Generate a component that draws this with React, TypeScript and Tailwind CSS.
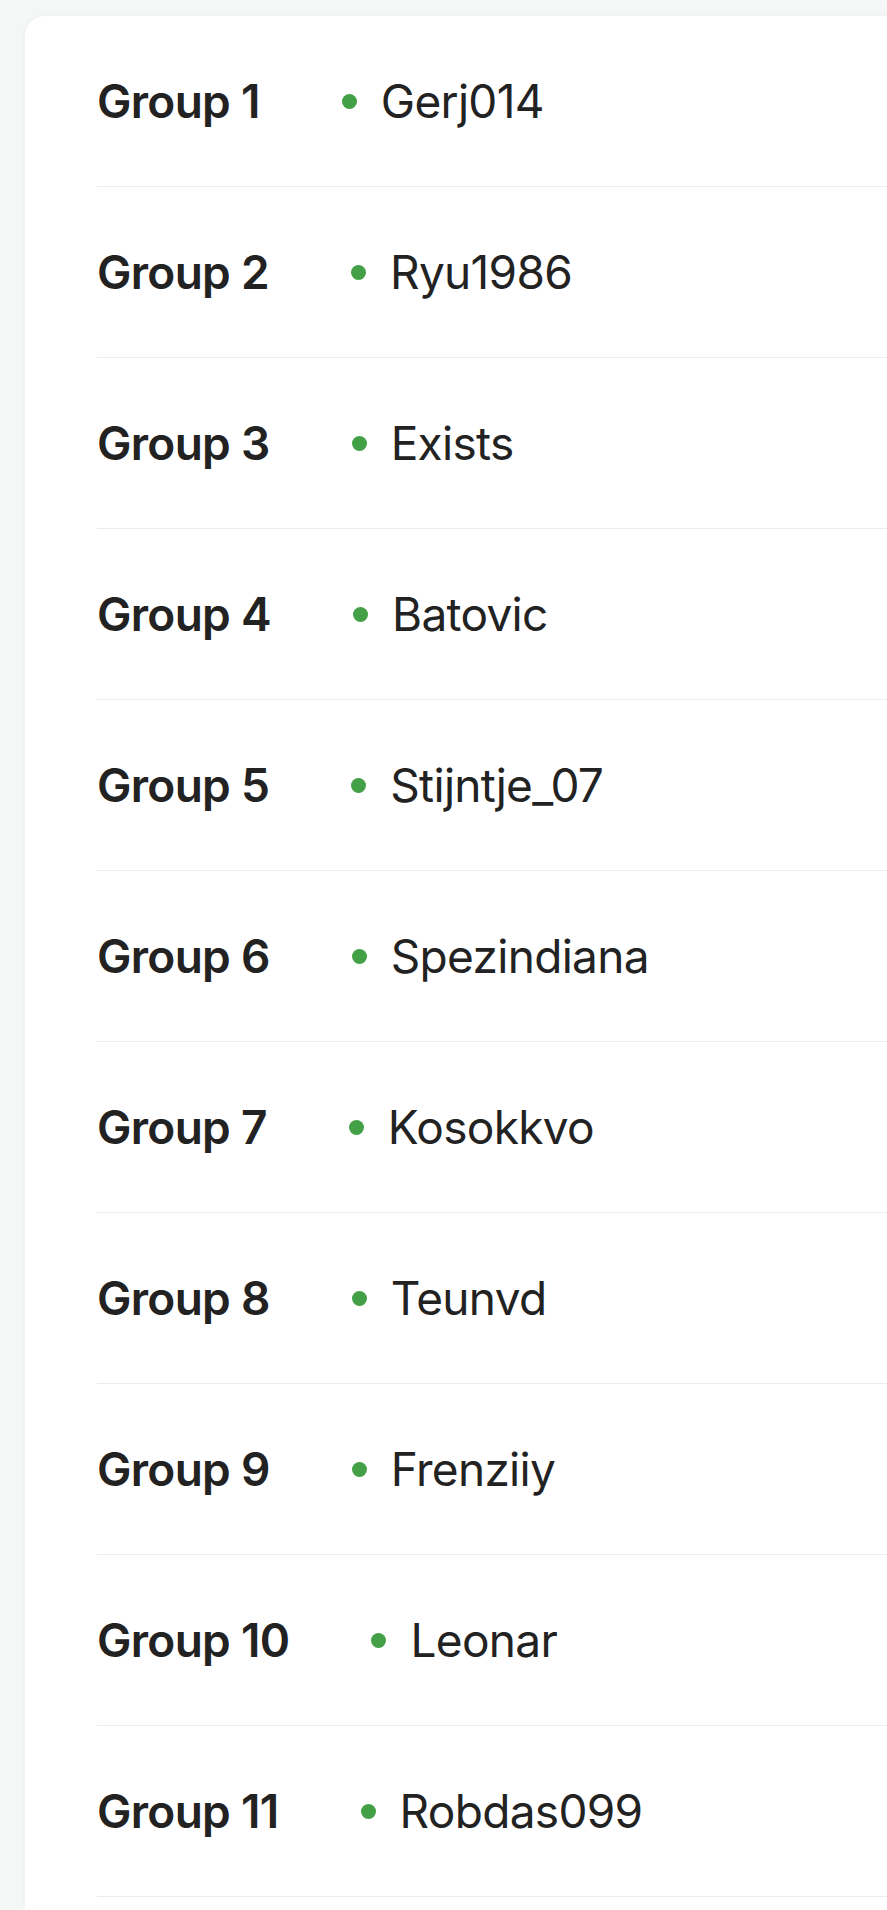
import React from 'react';

const rows = [
  { group: 'Group 1', name: 'Gerj014' },
  { group: 'Group 2', name: 'Ryu1986' },
  { group: 'Group 3', name: 'Exists' },
  { group: 'Group 4', name: 'Batovic' },
  { group: 'Group 5', name: 'Stijntje_07' },
  { group: 'Group 6', name: 'Spezindiana' },
  { group: 'Group 7', name: 'Kosokkvo' },
  { group: 'Group 8', name: 'Teunvd' },
  { group: 'Group 9', name: 'Frenziiy' },
  { group: 'Group 10', name: 'Leonar' },
  { group: 'Group 11', name: 'Robdas099' },
];

export default function App() {
  return (
    <div className="min-h-[1910px] h-[1910px] overflow-hidden bg-[#f5f7f6] pt-[16px] pl-[25px] font-['Inter',sans-serif] text-[#222222]">
      <div className="h-full bg-white rounded-tl-[20px] shadow-[0_0_6px_rgba(0,0,0,0.04)] pl-[72px]">
        {rows.map((r) => (
          <div key={r.group} className="h-[171px] flex items-center border-b border-[#ececec] text-[46px] tracking-[-0.015em]">
            <span className="font-semibold">{r.group}</span>
            <span className="ml-[82px] w-[15px] h-[15px] rounded-full bg-[#43a047] flex-shrink-0" />
            <span className="ml-[24px]">{r.name}</span>
          </div>
        ))}
      </div>
    </div>
  );
}
